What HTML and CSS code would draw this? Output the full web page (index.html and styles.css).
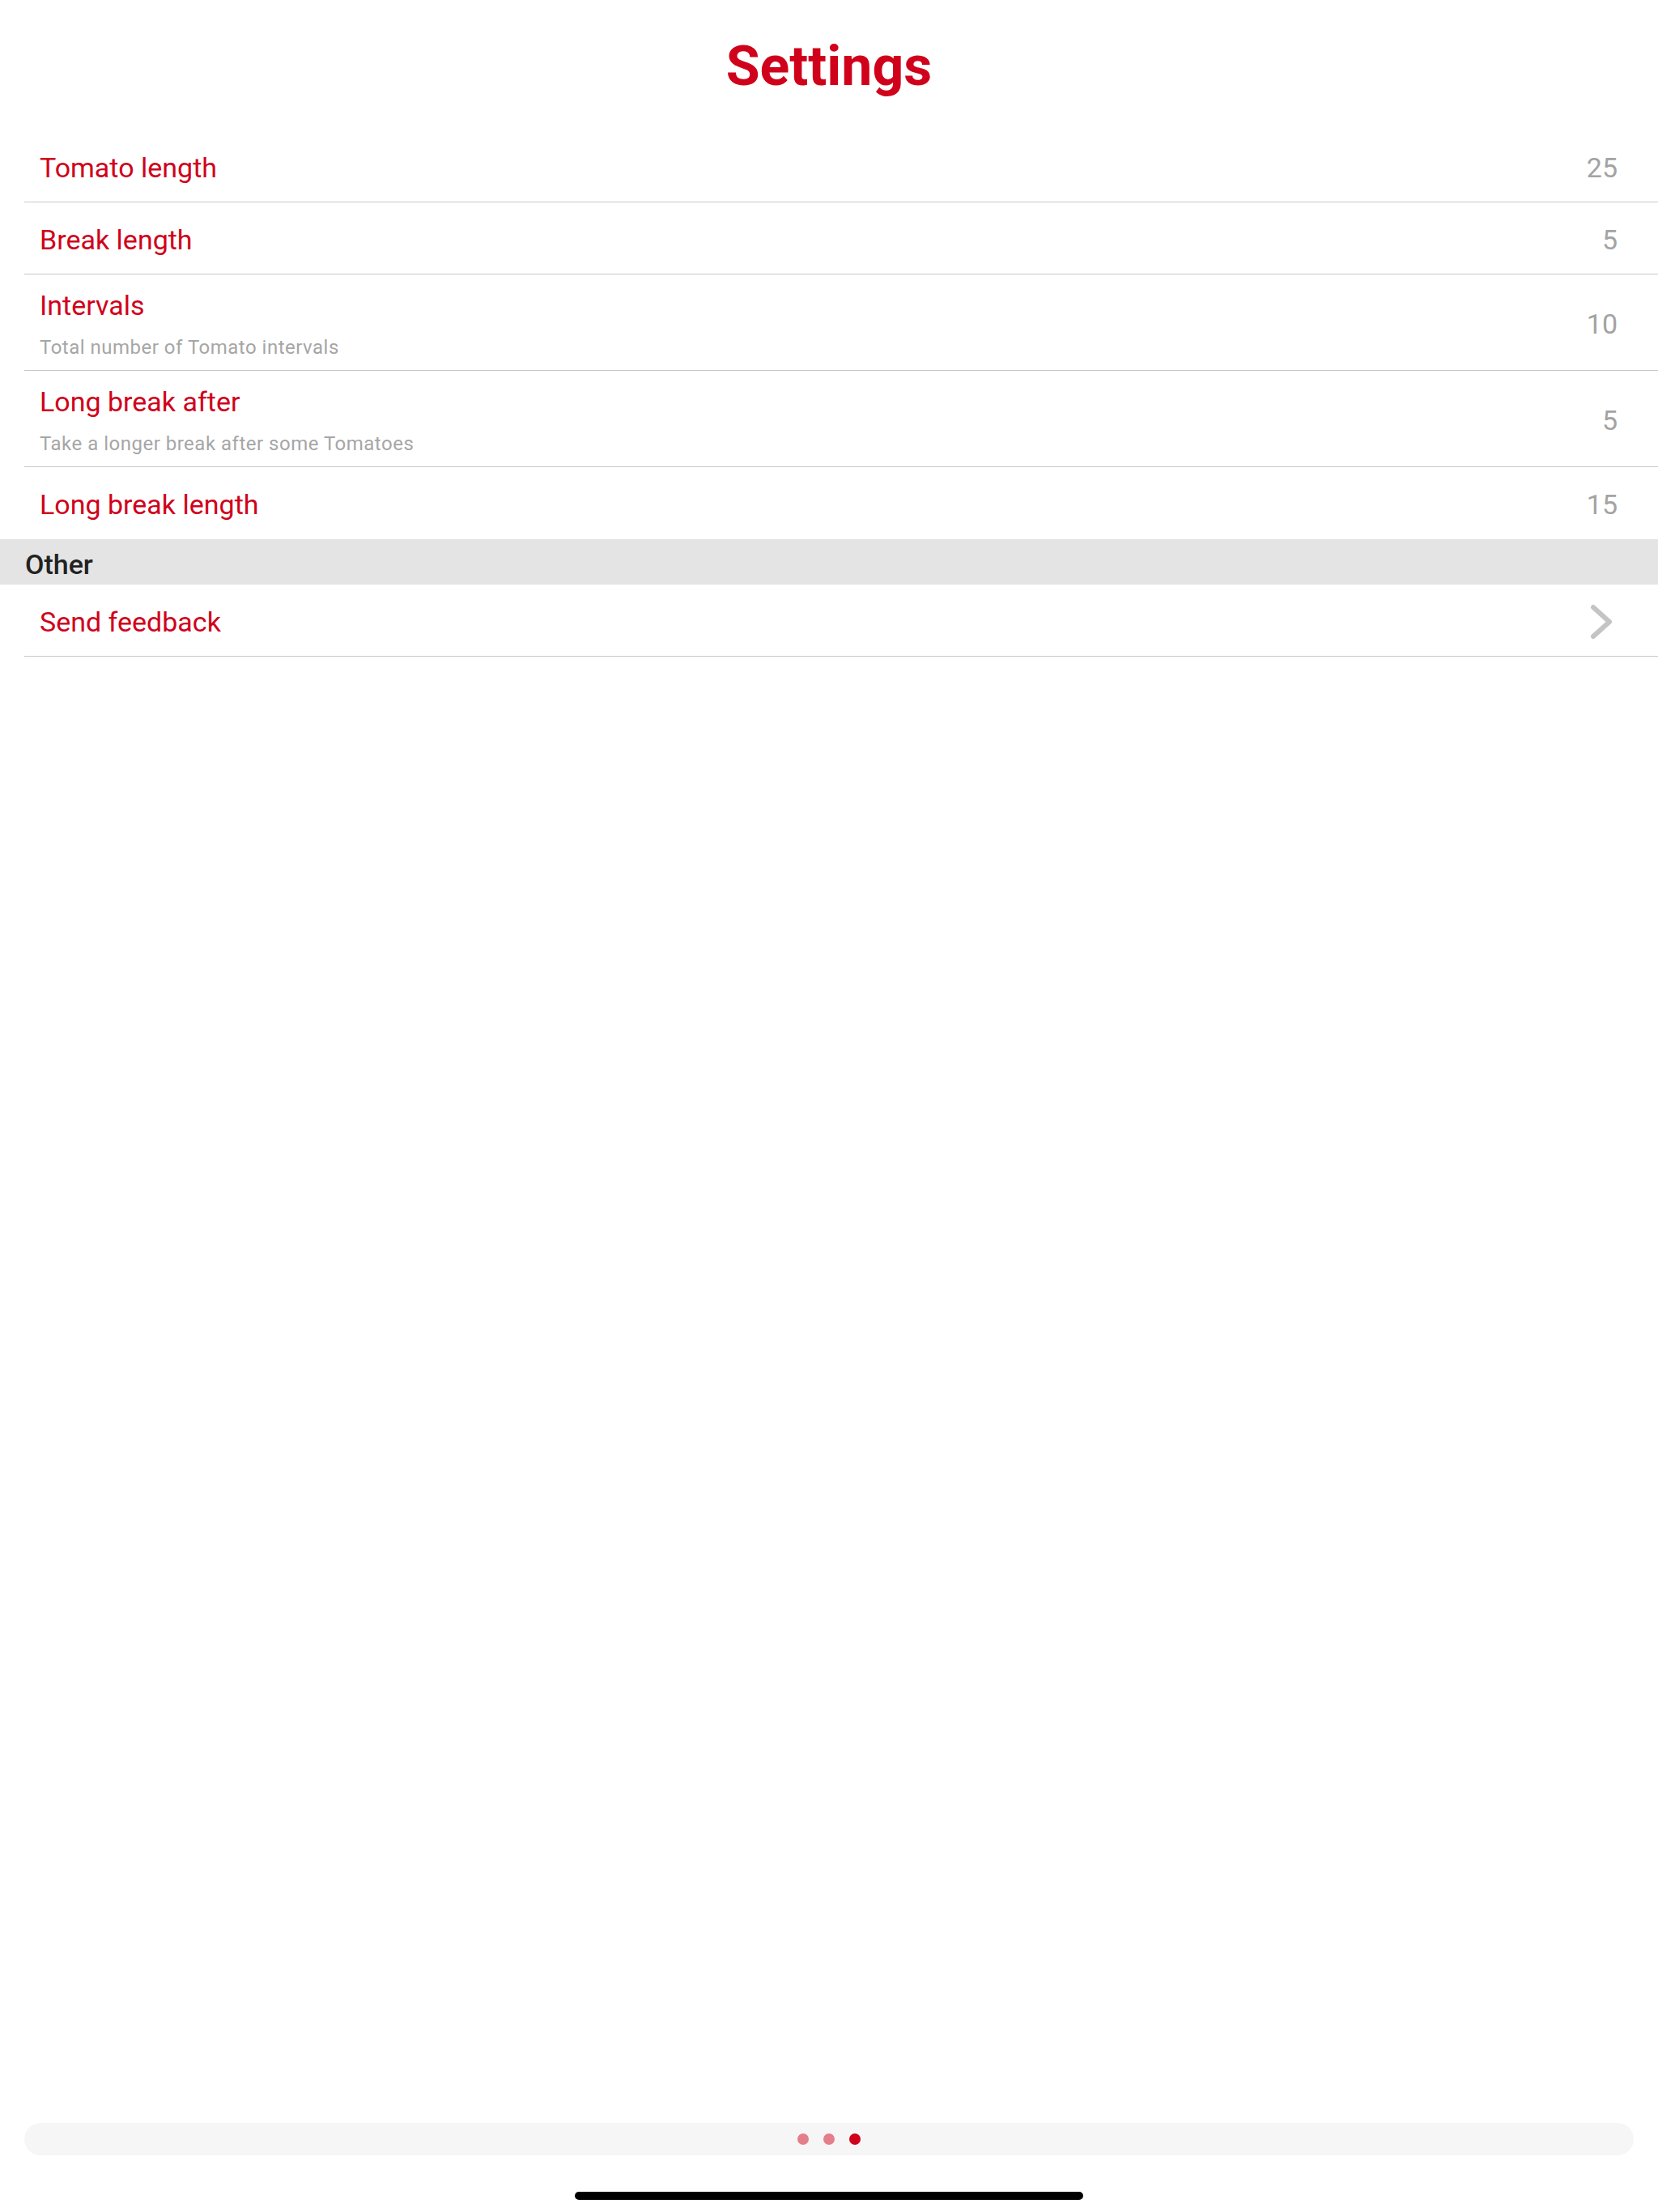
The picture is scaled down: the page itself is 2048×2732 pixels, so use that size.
FILE: index.html
```html
<!DOCTYPE html>
<html lang="en">
<head>
<meta charset="utf-8">
<title>Settings</title>
<link rel="stylesheet" href="styles.css">
</head>
<body>
<div class="screen">
  <header class="nav">
    <h1 class="nav-title">Settings</h1>
  </header>

  <section class="group">
    <div class="row">
      <div class="row-text"><span class="row-label">Tomato length</span></div>
      <span class="row-value">25</span>
    </div>
    <div class="row">
      <div class="row-text"><span class="row-label">Break length</span></div>
      <span class="row-value">5</span>
    </div>
    <div class="row row-tall">
      <div class="row-text">
        <span class="row-label">Intervals</span>
        <span class="row-sub">Total number of Tomato intervals</span>
      </div>
      <span class="row-value">10</span>
    </div>
    <div class="row row-tall">
      <div class="row-text">
        <span class="row-label">Long break after</span>
        <span class="row-sub">Take a longer break after some Tomatoes</span>
      </div>
      <span class="row-value">5</span>
    </div>
    <div class="row row-last">
      <div class="row-text"><span class="row-label">Long break length</span></div>
      <span class="row-value">15</span>
    </div>
  </section>

  <div class="section-header">Other</div>

  <section class="group">
    <div class="row">
      <div class="row-text"><span class="row-label">Send feedback</span></div>
      <svg class="chevron" width="28" height="44" viewBox="0 0 28 44" aria-hidden="true">
        <polyline points="4,4 24,22 4,40" fill="none" stroke="#c4c4c4" stroke-width="6" stroke-linecap="round" stroke-linejoin="round"/>
      </svg>
    </div>
  </section>

  <div class="spacer"></div>

  <footer class="footer">
    <div class="pager">
      <span class="dot"></span>
      <span class="dot"></span>
      <span class="dot dot-active"></span>
    </div>
    <div class="home-indicator"></div>
  </footer>
</div>
</body>
</html>
```

FILE: styles.css
```css
html, body {
  margin: 0;
  padding: 0;
  background: #ffffff;
}

body {
  font-family: Roboto, "Liberation Sans", sans-serif;
  -webkit-font-smoothing: antialiased;
}

.screen {
  display: flex;
  flex-direction: column;
  min-height: 2732px;
  box-sizing: border-box;
}

.nav {
  height: 161px;
  box-sizing: border-box;
  padding-top: 48px;
  text-align: center;
}

.nav-title {
  margin: 0;
  font-size: 68px;
  line-height: 68px;
  font-weight: 700;
  color: #d0021b;
}

.group {
  margin-left: 30px;
}

.row {
  display: flex;
  align-items: center;
  justify-content: space-between;
  min-height: 85px;
  box-sizing: content-box;
  padding: 3px 50px 0 19px;
  border-bottom: 1.5px solid #c8c8c8;
}

.row-tall {
  min-height: 115px;
}

.row-last {
  border-bottom: none;
  min-height: 86px;
}

.row-text {
  display: flex;
  flex-direction: column;
  gap: 18px;
}

.row-label {
  font-size: 34px;
  line-height: 40px;
  color: #d0021b;
}

.row-sub {
  font-size: 24px;
  line-height: 28px;
  color: #a6a6a6;
  letter-spacing: 0.5px;
}

.row-value {
  font-size: 34px;
  line-height: 40px;
  color: #a3a3a3;
}

.chevron {
  display: block;
  margin-right: 6px;
}

.section-header {
  height: 53px;
  padding-top: 3px;
  line-height: 56px;
  background: #e4e4e4;
  padding-left: 31px;
  font-size: 34px;
  font-weight: 500;
  color: #222222;
}

.spacer {
  flex: 1;
}

.footer {
  display: flex;
  flex-direction: column;
  align-items: center;
}

.pager {
  align-self: stretch;
  margin: 0 30px;
  height: 40px;
  border-radius: 20px;
  background: #f6f6f6;
  display: flex;
  align-items: center;
  justify-content: center;
  gap: 18px;
}

.dot {
  width: 14px;
  height: 14px;
  border-radius: 50%;
  background: #e57e8b;
}

.dot-active {
  background: #d0021b;
}

.home-indicator {
  width: 628px;
  height: 10px;
  border-radius: 5px;
  background: #000000;
  margin-top: 45px;
  margin-bottom: 15px;
}
```
